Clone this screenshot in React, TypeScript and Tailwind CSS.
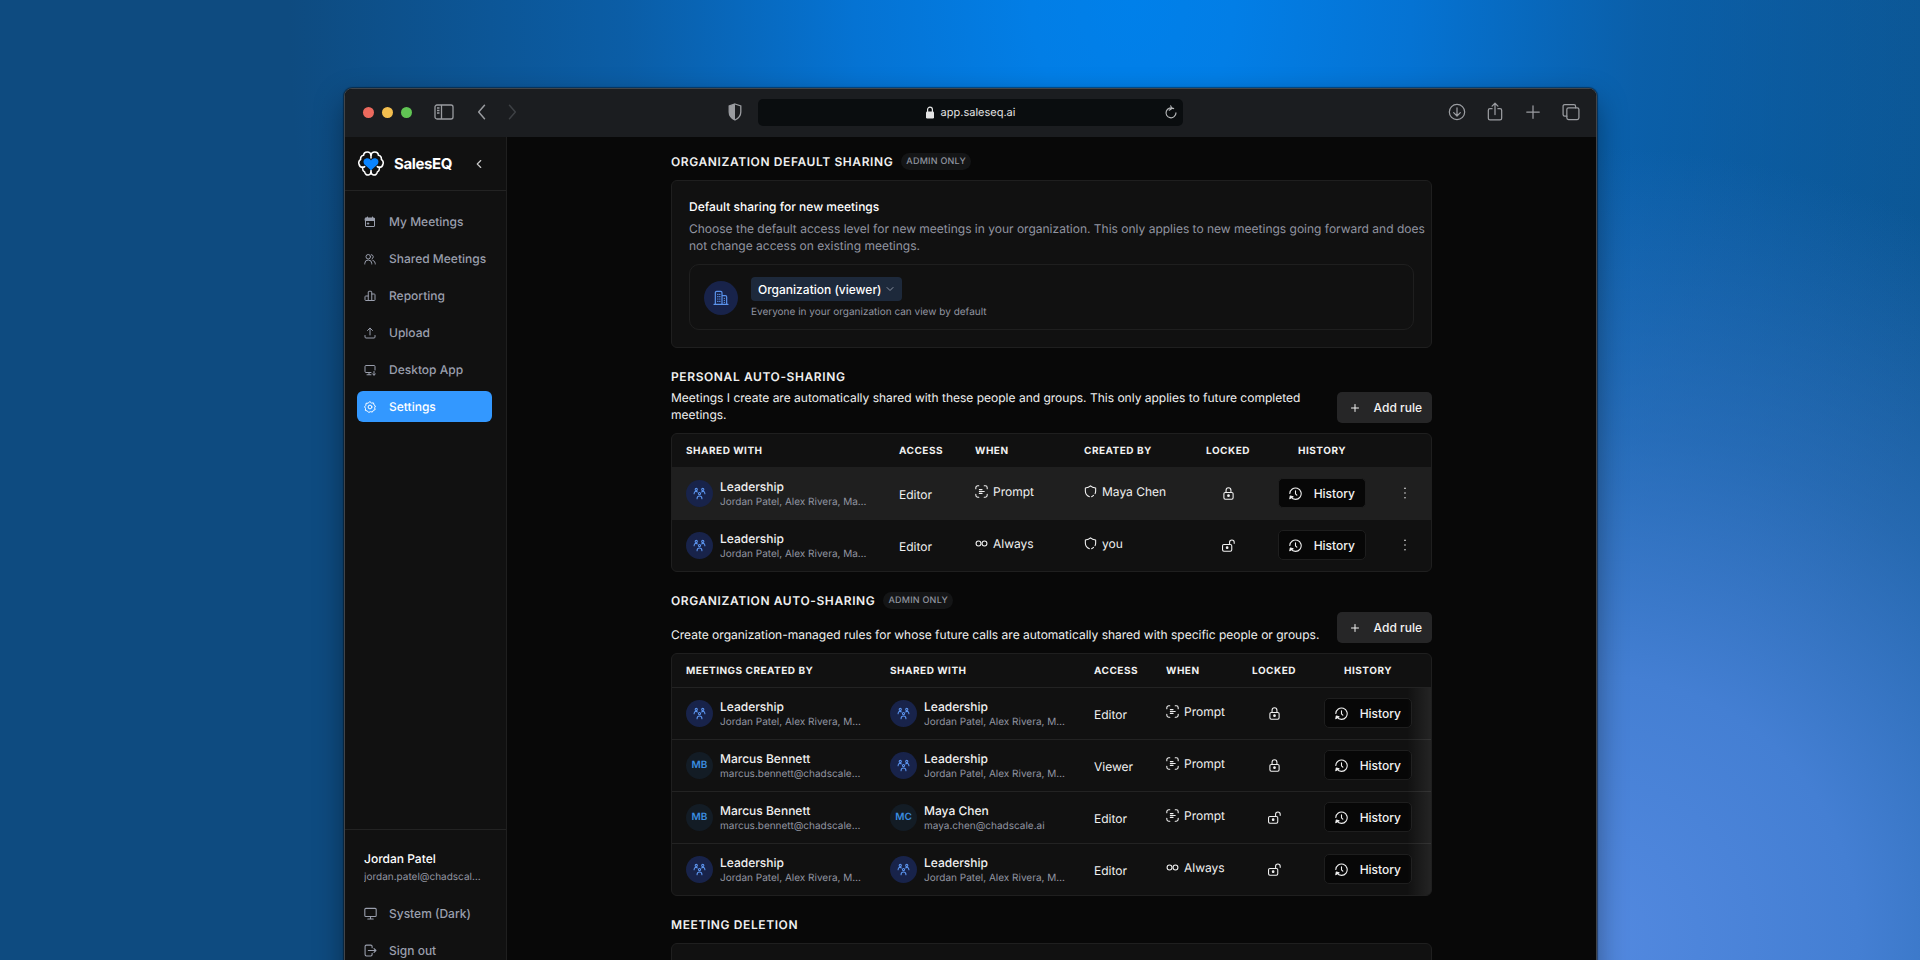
import { useState } from 'react';
import type { ReactNode } from 'react';
import { ChevronDown, ChevronLeft, ChevronRight, Plus } from 'lucide-react';

interface Party {
  name: string;
  detail: string;
  initials?: string;
}

interface Rule {
  id: number;
  from?: Party;
  to: Party;
  access: string;
  when: 'Prompt' | 'Always';
  createdBy?: string;
  locked: boolean;
}

const leadership: Party = { name: 'Leadership', detail: 'Jordan Patel, Alex Rivera, Maya Chen' };
const marcus: Party = { name: 'Marcus Bennett', detail: 'marcus.bennett@chadscale.ai', initials: 'MB' };
const maya: Party = { name: 'Maya Chen', detail: 'maya.chen@chadscale.ai', initials: 'MC' };

const personalRules: Rule[] = [
  { id: 1, to: leadership, access: 'Editor', when: 'Prompt', createdBy: 'Maya Chen', locked: true },
  { id: 2, to: leadership, access: 'Editor', when: 'Always', createdBy: 'you', locked: false },
];

const orgRules: Rule[] = [
  { id: 1, from: leadership, to: leadership, access: 'Editor', when: 'Prompt', locked: true },
  { id: 2, from: marcus, to: leadership, access: 'Viewer', when: 'Prompt', locked: true },
  { id: 3, from: marcus, to: maya, access: 'Editor', when: 'Prompt', locked: false },
  { id: 4, from: leadership, to: leadership, access: 'Editor', when: 'Always', locked: false },
];

function Icon({ children, className = 'size-3', stroke = 2 }: { children: ReactNode; className?: string; stroke?: number }) {
  return (
    <svg
      viewBox="0 0 24 24"
      fill="none"
      stroke="currentColor"
      strokeWidth={stroke}
      strokeLinecap="round"
      strokeLinejoin="round"
      className={`shrink-0 ${className}`}
      aria-hidden="true"
    >
      {children}
    </svg>
  );
}

const navItems = [
  {
    label: 'My Meetings',
    icon: (
      <>
        <path d="M4 4h16a1 1 0 0 1 1 1v15a1 1 0 0 1-1 1H4a1 1 0 0 1-1-1V5a1 1 0 0 1 1-1z" />
        <path d="M3 5h18v4H3z" fill="currentColor" />
        <path d="M7 2v3M17 2v3" />
        <path d="M7.500 14h2v2h-2z" fill="currentColor" />
      </>
    ),
  },
  {
    label: 'Shared Meetings',
    icon: (
      <>
        <circle cx="8.500" cy="7.500" r="4.500" />
        <path d="M1.500 22v-1a7 7 0 0 1 14 0v1" />
        <path d="M14.500 3.300a4.500 4.500 0 0 1 1.500 8.500" />
        <path d="M17.500 14.500a7 7 0 0 1 5 6.500v1" />
      </>
    ),
  },
  {
    label: 'Reporting',
    icon: (
      <>
        <path d="M8.500 21V4a1.500 1.500 0 0 1 1.500-1.500h4A1.500 1.500 0 0 1 15.500 4v17" />
        <path d="M8.500 12H3.500A1.500 1.500 0 0 0 2 13.500v6A1.500 1.500 0 0 0 3.500 21h17a1.500 1.500 0 0 0 1.500-1.500v-10A1.500 1.500 0 0 0 20.500 8h-5" />
      </>
    ),
  },
  {
    label: 'Upload',
    icon: (
      <>
        <path d="M12 16V2.500M7 7l5-5 5 5" />
        <path d="M2 17v3a2 2 0 0 0 2 2h16a2 2 0 0 0 2-2v-3" />
      </>
    ),
  },
  {
    label: 'Desktop App',
    icon: (
      <>
        <path d="M22 12V5a2 2 0 0 0-2-2H4a2 2 0 0 0-2 2v10a2 2 0 0 0 2 2h10" />
        <path d="M10 17v4M6 21.500h8" />
        <path d="M20 15v7M17 19.500l3 3 3-3" />
      </>
    ),
  },
  {
    label: 'Settings',
    icon: (
      <>
        <path d="M12 1.500l3 2.600 4-.3.900 3.900 3 2.300-1.600 3.500 1 3.800-3.700 1.400-1.800 3.400-3.900-.7-3.600 1.500-2.600-3-3.900-.9.200-4L1.300 11.600l2.500-3L4 4.600l4-.3z" />
        <circle cx="12" cy="12" r="3.800" />
      </>
    ),
  },
];

function BrainLogo() {
  return (
    <svg viewBox="0 0 78 75" className="h-[25px] w-[26px] shrink-0" fill="none" aria-hidden="true">
      <g stroke="#fff" strokeWidth="4.600" strokeLinecap="round" strokeLinejoin="round">
        <path d="M39 12C38 6 33 3 28 3c-7 0-11 5-11 10C10 14 7 19 8 25c-5 4-7 9-5 14 1 6 6 10 11 10-1 7 1 12 6 14 1 7 7 10 11 9 5-1 8-4 8-9v-5" />
        <path d="M39 12c1-6 6-9 11-9 7 0 11 5 11 10 7 1 10 6 9 12 5 4 7 9 5 14-1 6-6 10-11 10 1 7-1 12-6 14-1 7-7 10-11 9-5-1-8-4-8-9" />
        <path d="M39 12v9M14 49c3 0 5-1 6-2M64 49c-3 0-5-1-6-2" />
      </g>
      <path d="M39 58L22 43c-8-7-7-18 2-20.500 7-2 12.500 1.500 15 6 2.500-4.500 8-8 15-6 9 2.500 10 13.500 2 20.500z" fill="#0a84ff" />
    </svg>
  );
}

function GroupIcon() {
  return (
    <Icon className="size-[13px] text-[#5b93ec]">
      <circle cx="6" cy="4.500" r="2" />
      <circle cx="18" cy="4.500" r="2" />
      <circle cx="12" cy="12" r="2" />
      <path d="M2 12.500c0-2.500 1-4 3-4.500 1.500 0 2.500.5 3 1M22 12.500c0-2.500-1-4-3-4.500-1.500 0-2.500.5-3 1M7.500 21.500c0-3 2-5 4.500-5s4.500 2 4.500 5" />
    </Icon>
  );
}

function LockIcon({ locked }: { locked: boolean }) {
  return (
    <Icon className="mx-auto size-[13px]">
      <rect x={locked ? 3.500 : 1} y="10" width="17" height="12.500" rx="2.500" />
      {locked ? <path d="M7.500 10V6a4.500 4.500 0 0 1 9 0v4" /> : <path d="M14 10V6a4.250 4.250 0 0 1 8.500 0v2" />}
      <circle cx={locked ? 12 : 9.500} cy="16" r="1.500" fill="currentColor" />
    </Icon>
  );
}

function WhenIcon({ when }: { when: Rule['when'] }) {
  if (when === 'Always') {
    return (
      <Icon className="size-[13px]">
        <circle cx="6.500" cy="12" r="4.500" />
        <circle cx="17.500" cy="12" r="4.500" />
      </Icon>
    );
  }
  return (
    <Icon className="size-[13px]">
      <path d="M1.500 7V5a3.500 3.500 0 0 1 3.500-3.500h2M17 1.500h2A3.500 3.500 0 0 1 22.500 5v2M22.500 17v2a3.500 3.500 0 0 1-3.500 3.500h-2M7 22.500H5A3.500 3.500 0 0 1 1.500 19v-2" />
      <path d="M8 8.500h5M8 12h9M8 15.500h5" />
    </Icon>
  );
}

function HistoryButton() {
  return (
    <button className="mx-auto flex h-[30px] w-[88px] items-center justify-between rounded-[5px] border border-[#1e1e1e] bg-[#070707] px-2.5 font-medium text-[#f2f2f2]">
      <Icon className="size-[13px]">
        <path d="M3.500 18.500A10.500 10.500 0 1 0 1.500 12" />
        <path d="M1.500 21.500l1-5 5 1.500z" fill="currentColor" />
        <path d="M12 7v5.500l2.500 2.500" />
      </Icon>
      History
    </button>
  );
}

function AddRuleButton() {
  return (
    <button className="flex h-[31px] w-[95px] shrink-0 items-center justify-between rounded-[5px] bg-[#262627] pr-2.5 pl-3 font-medium text-[#f2f2f2]">
      <Plus className="size-3" strokeWidth={2} />
      Add rule
    </button>
  );
}

function AdminBadge() {
  return (
    <span className="flex h-[17px] items-center rounded-full bg-[#141516] px-[5px] text-[9px] font-medium tracking-wide text-[#8f939e]">
      ADMIN ONLY
    </span>
  );
}

function PartyCell({ party }: { party: Party }) {
  return (
    <div className="flex items-center gap-[7px]">
      {party.initials ? (
        <span className="flex size-[27px] shrink-0 items-center justify-center rounded-full bg-[#131c25] text-[10px] font-semibold text-[#3b8de0]">
          {party.initials}
        </span>
      ) : (
        <span className="flex size-[27px] shrink-0 items-center justify-center rounded-full bg-[#18234a]">
          <GroupIcon />
        </span>
      )}
      <div className="min-w-0 pt-0.5">
        <div className="truncate leading-4 font-medium">{party.name}</div>
        <div className="truncate text-[10px] leading-[15px] text-[#9195a1]">{party.detail}</div>
      </div>
    </div>
  );
}

function WhenCell({ when }: { when: Rule['when'] }) {
  return (
    <div className="flex items-center gap-[5px] pb-[3px]">
      <WhenIcon when={when} />
      {when}
    </div>
  );
}

const headCell = 'px-3.5 pt-0.5 text-left font-bold';
const centerHeadCell = 'pt-0.5 font-bold';

export default function App() {
  const [active, setActive] = useState('Settings');
  const [sharing, setSharing] = useState('viewer');

  return (
    <div className="h-screen overflow-hidden bg-[radial-gradient(ellipse_46%_92%_at_83%_98%,#5389e0_0%,#447fd3_30%,#447fd377_58%,transparent_90%),radial-gradient(ellipse_44%_120%_at_59%_0%,#0080ea_0%,#027ee6_12%,#0573d3_33%,#0a62b0cc_60%,transparent_100%),linear-gradient(90deg,#0e4b80_0%,#0e4b80_40%,#0c5693_100%)] pt-[88px] pr-[323px] pl-[344px] font-['Inter',sans-serif] text-xs leading-[17px] text-[#f0f0f0] antialiased [text-rendering:geometricPrecision]">
      <div className="flex h-[calc(100vh-64px)] flex-col overflow-hidden rounded-t-lg border border-[#41454a] bg-[#080808] shadow-[0_0_1px_1px_#00000066,0_12px_30px_#00000066]">
        {/* Browser toolbar */}
        <div className="grid h-12 shrink-0 grid-cols-[1fr_425px_1fr] items-center bg-[#1b1d20] pb-0.5 text-[#9a9ca0]">
          <div className="flex items-center pr-4 pl-[18px]">
            <div className="flex gap-2">
              <span className="size-[11px] rounded-full bg-[#ec6a5e]" />
              <span className="size-[11px] rounded-full bg-[#f4bf4f]" />
              <span className="size-[11px] rounded-full bg-[#61c554]" />
            </div>
            <button aria-label="Toggle sidebar" className="ml-[22px]">
              <svg viewBox="0 0 20 16" className="h-4 w-5" fill="none" stroke="currentColor" strokeWidth="1.300" aria-hidden="true">
                <rect x="1" y="1" width="18" height="14" rx="2" />
                <path d="M7.500 1v14M3 4h2.500M3 6.500h2.500M3 9h2.500" />
              </svg>
            </button>
            <button aria-label="Back" className="ml-[18px]">
              <Icon className="size-5" stroke={1.8}>
                <path d="M15 4l-7 8 7 8" />
              </Icon>
            </button>
            <button aria-label="Forward" className="ml-2.5 text-[#3d4044]">
              <Icon className="size-5" stroke={1.8}>
                <path d="M9 4l7 8-7 8" />
              </Icon>
            </button>
            <svg viewBox="0 0 14 18" className="ml-auto h-[18px] w-3.5" aria-hidden="true">
              <path d="M7 1l5.800 2v6c0 4-2.800 6.500-5.800 8-3-1.500-5.800-4-5.800-8V3z" fill="none" stroke="currentColor" strokeWidth="1.300" />
              <path d="M7 1v16c-3-1.500-5.800-4-5.800-8V3z" fill="currentColor" />
            </svg>
          </div>
          <div className="flex h-[27px] items-center rounded-[5px] bg-[#0a0d0f] pr-[5px] pl-[18px] text-[#e4e4e4]">
            <div className="flex flex-1 items-center justify-center gap-1.5">
              <svg viewBox="0 0 10 13" className="h-[13px] w-2.5" aria-hidden="true">
                <rect x="1" y="5.500" width="8" height="7" rx="1.200" fill="currentColor" />
                <path d="M2.600 6V3.500a2.400 2.400 0 0 1 4.800 0V6" fill="none" stroke="currentColor" strokeWidth="1.200" />
              </svg>
              <span className="text-[11px]">app.saleseq.ai</span>
            </div>
            <button aria-label="Reload" className="text-[#b4b6b8]">
              <Icon className="size-[14px]">
                <path d="M16.500 6.200A8.500 8.500 0 1 0 20.500 13.500M11.500 1.500l2 4.500-4.500 3" />
              </Icon>
            </button>
          </div>
          <div className="flex items-center justify-end gap-[18px] pr-[15px]">
            <button aria-label="Downloads">
              <Icon className="size-5" stroke={1.5}>
                <circle cx="12" cy="12" r="9.200" />
                <path d="M12 7v9.500M8 12.800l4 4 4-4" />
              </Icon>
            </button>
            <button aria-label="Share">
              <Icon className="size-5" stroke={1.5}>
                <path d="M8.500 8H6a2 2 0 0 0-2 2v9.500a2 2 0 0 0 2 2h12a2 2 0 0 0 2-2V10a2 2 0 0 0-2-2h-2.500M12 15V1.500M8.500 5L12 1.500 15.500 5" />
              </Icon>
            </button>
            <button aria-label="New tab">
              <Icon className="size-5" stroke={1.5}>
                <path d="M12 4.500v15M4.500 12h15" />
              </Icon>
            </button>
            <button aria-label="Show tabs">
              <Icon className="size-5" stroke={1.5}>
                <rect x="7" y="7" width="14.500" height="14" rx="2" />
                <path d="M7 17H4.500a2 2 0 0 1-2-2V5a2 2 0 0 1 2-2h11a2 2 0 0 1 2 2v2" />
              </Icon>
            </button>
          </div>
        </div>

        <div className="flex min-h-0 flex-1">
          {/* Sidebar */}
          <aside className="flex w-[162px] shrink-0 flex-col border-r border-[#1f1f1f] bg-[#111111]">
            <div className="flex h-[54px] shrink-0 items-center border-b border-[#232323] pl-[13px]">
              <BrainLogo />
              <span className="ml-2.5 text-[15px] font-bold tracking-tight text-white">SalesEQ</span>
              <button aria-label="Collapse sidebar" className="mr-5 ml-auto text-[#c8c8c8]">
                <ChevronLeft className="size-3.5" />
              </button>
            </div>
            <nav className="flex flex-col gap-1.5 pt-[15px] pr-3.5 pl-3">
              {navItems.map((item) => (
                <a
                  key={item.label}
                  href="#"
                  onClick={() => setActive(item.label)}
                  className={`flex h-[31px] items-center gap-[13px] rounded-md pl-[7px] font-medium ${
                    active === item.label ? 'bg-[#3398ff] text-white' : 'text-[#9a9fad]'
                  }`}
                >
                  <Icon>{item.icon}</Icon>
                  <span className="whitespace-nowrap">{item.label}</span>
                </a>
              ))}
            </nav>
            <div className="mt-auto flex h-[154px] flex-col border-t border-[#232323] px-[19px] pt-5">
              <div className="font-medium text-white">Jordan Patel</div>
              <div className="mt-0.5 mr-1 truncate text-[10px] text-[#9195a1]">jordan.patel@chadscale.ai</div>
              <button className="mt-[19px] flex items-center gap-3 font-medium text-[#9a9fad]">
                <Icon className="size-[13px]">
                  <rect x="1.500" y="2.500" width="21" height="15" rx="2" />
                  <path d="M12 18v4M7 22h10" />
                </Icon>
                System (Dark)
              </button>
              <button className="mt-5 flex items-center gap-3 font-medium text-[#9a9fad]">
                <Icon className="size-[13px]">
                  <path d="M15 7V4.500A2.500 2.500 0 0 0 12.500 2h-8A2.500 2.500 0 0 0 2 4.500v15A2.500 2.500 0 0 0 4.500 22h8a2.500 2.500 0 0 0 2.500-2.500V17" />
                  <path d="M8 12h14M18.500 8.500L22 12l-3.500 3.500" />
                </Icon>
                Sign out
              </button>
            </div>
          </aside>

          {/* Settings */}
          <main className="min-w-0 flex-1 overflow-hidden px-6 pt-4">
            <div className="mx-auto flex max-w-[761px] flex-col gap-5">
              <section>
                <div className="flex h-[17px] items-center gap-2">
                  <h2 className="font-semibold tracking-wider">ORGANIZATION DEFAULT SHARING</h2>
                  <AdminBadge />
                </div>
                <div className="mt-2.5 rounded-md border border-[#1f1f1f] bg-[#111111] p-[17px]">
                  <h3 className="font-medium text-white">Default sharing for new meetings</h3>
                  <p className="-mr-3.5 mt-[5px] text-[#9195a1]">
                    Choose the default access level for new meetings in your organization. This only applies to new meetings going forward and does not change access on existing meetings.
                  </p>
                  <div className="mt-2.5 flex items-center gap-[13px] rounded-[10px] border border-[#1f1f1f] px-3.5 pt-3 pb-2.5">
                    <span className="flex size-[34px] shrink-0 items-center justify-center rounded-full bg-[#18234a] text-[#5b93ec]">
                      <Icon className="size-4" stroke={1.8}>
                        <path d="M3.500 21.500V4a2 2 0 0 1 2-2h6a2 2 0 0 1 2 2v17.500M13.500 8.500h5a2 2 0 0 1 2 2v11M1.500 21.500h21" />
                        <path d="M7 6.500h.500M10 6.500h.500M7 10h.500M10 10h.500M7 13.500h.500M10 13.500h.500M7 17h.500M10 17h.500M17 12.500v.200M17 15.500v.200M17 18.500v.200" />
                      </Icon>
                    </span>
                    <div>
                      <div className="relative w-[151px]">
                        <select
                          aria-label="Default sharing"
                          value={sharing}
                          onChange={(e) => setSharing(e.target.value)}
                          className="block h-6 w-full appearance-none rounded bg-[#1d293b] pr-4 pl-[7px] font-medium text-white"
                        >
                          <option value="viewer">Organization (viewer)</option>
                          <option value="editor">Organization (editor)</option>
                          <option value="private">Private</option>
                        </select>
                        <ChevronDown className="pointer-events-none absolute top-1.5 right-1.5 size-3 text-[#8b93a3]" />
                      </div>
                      <p className="mt-1 text-[10px] leading-[14px] text-[#9195a1]">Everyone in your organization can view by default</p>
                    </div>
                  </div>
                </div>
              </section>

              <section>
                <div className="flex items-end justify-between gap-3.5">
                  <div>
                    <h2 className="font-semibold tracking-wider">PERSONAL AUTO-SHARING</h2>
                    <p className="mt-1">
                      Meetings I create are automatically shared with these people and groups. This only applies to future completed meetings.
                    </p>
                  </div>
                  <AddRuleButton />
                </div>
                <div className="mt-2.5 overflow-hidden rounded-md border border-[#1f1f1f] bg-[#111111]">
                  <table className="w-full table-fixed">
                    <thead>
                      <tr className="h-[33px] text-[10px] tracking-wider">
                        <th className={headCell}>SHARED WITH</th>
                        <th className={`w-[76px] ${headCell}`}>ACCESS</th>
                        <th className={`w-[109px] ${headCell}`}>WHEN</th>
                        <th className={`w-[121px] ${headCell}`}>CREATED BY</th>
                        <th className={`w-[74px] ${centerHeadCell}`}>LOCKED</th>
                        <th className={`w-[114px] ${centerHeadCell}`}>HISTORY</th>
                        <th className="w-[52px]" />
                      </tr>
                    </thead>
                    <tbody>
                      {personalRules.map((rule) => (
                        <tr key={rule.id} className="h-[52px] border-t border-[#1f1f1f] first:bg-[#1f1f1f]">
                          <td className="px-3.5">
                            <PartyCell party={rule.to} />
                          </td>
                          <td className="px-3.5 pt-0.5">{rule.access}</td>
                          <td className="px-3.5">
                            <WhenCell when={rule.when} />
                          </td>
                          <td className="px-3.5">
                            <div className="flex items-center gap-[5px] pb-[3px]">
                              <Icon className="size-[13px]">
                                <path d="M10 21.500C5 19.500 2.500 16 2.500 11V5.500C6 5 9.500 4 12 1.500 14.500 4 18 5 21.500 5.500V11c0 2-.4 3.500-1 5M14 21.500c1.200-.5 2.500-1.300 3.500-2.500" />
                              </Icon>
                              {rule.createdBy}
                            </div>
                          </td>
                          <td>
                            <LockIcon locked={rule.locked} />
                          </td>
                          <td>
                            <HistoryButton />
                          </td>
                          <td>
                            <button aria-label="Rule options" className="mx-auto block">
                              <Icon className="size-3.5" stroke={2.5}>
                                <path d="M12 4v.100M12 12v.100M12 20v.100" />
                              </Icon>
                            </button>
                          </td>
                        </tr>
                      ))}
                    </tbody>
                  </table>
                </div>
              </section>

              <section>
                <div className="flex items-end justify-between gap-3.5">
                  <div>
                    <div className="flex h-[17px] items-center gap-2">
                      <h2 className="font-semibold tracking-wider">ORGANIZATION AUTO-SHARING</h2>
                      <AdminBadge />
                    </div>
                    <p className="mt-[17px]">
                      Create organization-managed rules for whose future calls are automatically shared with specific people or groups.
                    </p>
                  </div>
                  <AddRuleButton />
                </div>
                <div className="relative mt-2.5 overflow-hidden rounded-md border border-[#1f1f1f] bg-[#111111]">
                  <table className="w-full table-fixed">
                    <thead>
                      <tr className="h-[33px] text-[10px] tracking-wider">
                        <th className={headCell}>MEETINGS CREATED BY</th>
                        <th className={headCell}>SHARED WITH</th>
                        <th className={`w-[72px] ${headCell}`}>ACCESS</th>
                        <th className={`w-[85px] ${headCell}`}>WHEN</th>
                        <th className={`w-[74px] ${centerHeadCell}`}>LOCKED</th>
                        <th className={`w-[114px] ${centerHeadCell}`}>HISTORY</th>
                        <th className="w-1.5" />
                      </tr>
                    </thead>
                    <tbody>
                      {orgRules.map((rule) => (
                        <tr key={rule.id} className="h-[52px] border-t border-[#232323]">
                          <td className="px-3.5">{rule.from && <PartyCell party={rule.from} />}</td>
                          <td className="px-3.5">
                            <PartyCell party={rule.to} />
                          </td>
                          <td className="px-3.5 pt-0.5">{rule.access}</td>
                          <td className="px-3.5">
                            <WhenCell when={rule.when} />
                          </td>
                          <td>
                            <LockIcon locked={rule.locked} />
                          </td>
                          <td>
                            <HistoryButton />
                          </td>
                          <td />
                        </tr>
                      ))}
                    </tbody>
                  </table>
                  <div className="pointer-events-none absolute top-[34px] right-0 bottom-0 w-6 bg-linear-to-r from-transparent to-white/8" />
                </div>
              </section>

              <section>
                <h2 className="font-semibold tracking-wider">MEETING DELETION</h2>
                <div className="mt-2.5 h-[120px] rounded-md border border-[#1f1f1f] bg-[#111111]" />
              </section>
            </div>
          </main>
        </div>
      </div>
    </div>
  );
}
